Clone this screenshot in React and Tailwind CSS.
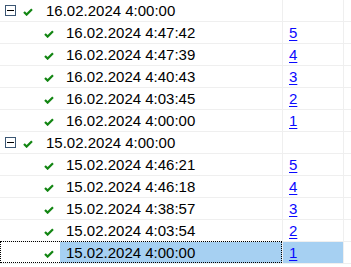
import React from "react";

const Check = ({ className = "" }) => (
  <svg width="10" height="8" viewBox="0 0 10 8" className={className}>
    <path d="M1 4 L3.6 6.6 L9 1.2" fill="none" stroke="#138613" strokeWidth="2.2" />
  </svg>
);

const Box = () => (
  <div className="w-[11px] h-[11px] border border-[#3b5673] bg-white flex items-center justify-center">
    <div className="w-[7px] h-px bg-black" />
  </div>
);

const groups = [
  {
    date: "16.02.2024 4:00:00",
    items: [
      ["16.02.2024 4:47:42", "5"],
      ["16.02.2024 4:47:39", "4"],
      ["16.02.2024 4:40:43", "3"],
      ["16.02.2024 4:03:45", "2"],
      ["16.02.2024 4:00:00", "1"],
    ],
  },
  {
    date: "15.02.2024 4:00:00",
    items: [
      ["15.02.2024 4:46:21", "5"],
      ["15.02.2024 4:46:18", "4"],
      ["15.02.2024 4:38:57", "3"],
      ["15.02.2024 4:03:54", "2"],
      ["15.02.2024 4:00:00", "1"],
    ],
  },
];

function GroupRow({ text }) {
  return (
    <div className="flex h-[22px] border-b border-[#efefef]">
      <div className="w-[283px] border-r border-[#efefef] flex items-center">
        <div className="ml-[5px]"><Box /></div>
        <Check className="ml-[7px] mt-[3px]" />
        <span className="ml-[13px]">{text}</span>
      </div>
      <div className="w-[61px] border-r border-[#efefef]" />
      <div className="flex-1" />
    </div>
  );
}

function ChildRow({ text, n, selected }) {
  return (
    <div className="relative flex h-[22px] border-b border-[#efefef]">
      <div className="w-[283px] border-r border-[#efefef] flex items-center">
        <Check className="ml-[44px] mt-[3px]" />
        {selected ? (
          <div className="ml-[6px] h-full flex-1 bg-[#a6d0f2] flex items-center pl-[6px]">{text}</div>
        ) : (
          <span className="ml-[12px]">{text}</span>
        )}
      </div>
      <div className={"w-[61px] border-r border-[#efefef] flex items-center pl-[6px] " + (selected ? "bg-[#a6d0f2]" : "")}>
        <span className="text-[#0a0aff] underline underline-offset-2">{n}</span>
      </div>
      <div className="flex-1" />
      {selected && (
        <div className="absolute left-0 top-[-1px] w-[282px] h-[22px] border border-dotted border-black pointer-events-none" />
      )}
    </div>
  );
}

export default function App() {
  return (
    <div
      className="w-[351px] h-[267px] bg-white overflow-hidden text-[15px] text-black leading-none"
      style={{ fontFamily: '"Liberation Sans", Arial, sans-serif' }}
    >
      {groups.map((g, gi) => (
        <div key={gi}>
          <GroupRow text={g.date} />
          {g.items.map(([t, n], i) => (
            <ChildRow key={i} text={t} n={n} selected={gi === 1 && i === 4} />
          ))}
        </div>
      ))}
    </div>
  );
}
